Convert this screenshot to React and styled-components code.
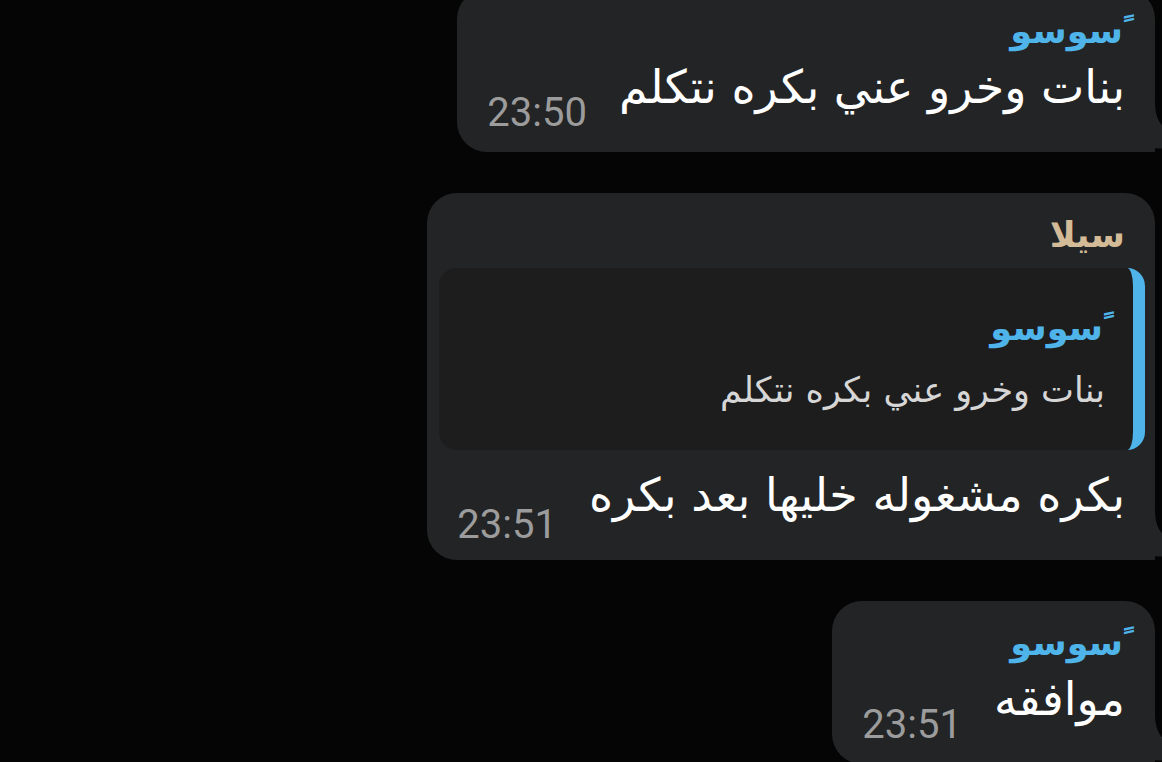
import React from "react";
import styled, { createGlobalStyle } from "styled-components";

const GlobalStyle = createGlobalStyle`
  html, body {
    margin: 0;
    padding: 0;
    background: #050505;
    overflow: hidden;
  }
  #root {
    width: 1162px;
    height: 762px;
    overflow: hidden;
  }
`;

const BLUE = "#4fb4ea";
const BEIGE = "#d4bb98";
const BUBBLE = "#232425";

const Chat = styled.div`
  display: flex;
  flex-direction: column;
  align-items: flex-end;
  gap: 41px;
  margin-top: -11px;
  padding-right: 7px;
`;

const Bubble = styled.div`
  position: relative;
  display: flex;
  flex-direction: column;
  align-items: flex-end;
  background: ${BUBBLE};
  border-radius: 30px 30px 0 30px;
  padding: 22px 30px 19px 30px;
`;

const Tail = styled.svg`
  position: absolute;
  right: -16px;
  bottom: 0;
  width: 30px;
  height: 50px;
`;

const Sender = styled.div`
  font-family: "DejaVu Sans", sans-serif;
  font-weight: bold;
  font-size: 35px;
  line-height: 40px;
  color: ${(p) => p.color};
  margin-right: ${(p) => (p.$marked ? "-10px" : "0")};
`;

const Row = styled.div`
  display: flex;
  align-items: flex-end;
  gap: 32px;
  margin-top: ${(p) => p.$top}px;
`;

const Text = styled.div`
  font-family: "DejaVu Sans", sans-serif;
  font-size: 46px;
  line-height: 60px;
  color: #ffffff;
  margin-bottom: 16px;
`;

const Time = styled.div`
  font-family: Roboto, "Liberation Sans", sans-serif;
  font-size: 40px;
  line-height: 40px;
  color: #9c9c9c;
  margin-bottom: ${(p) => p.$drop}px;
`;

const Quote = styled.div`
  align-self: stretch;
  display: flex;
  flex-direction: column;
  align-items: flex-end;
  margin: 13px -20px 0 -18px;
  padding: 40px 28px 37px 0;
  background: #1d1d1e;
  border-radius: 18px;
  border-right: 12px solid ${BLUE};
`;

const QuoteText = styled.div`
  font-family: "DejaVu Sans", sans-serif;
  font-size: 35px;
  line-height: 46px;
  color: #d6d6d6;
  margin-top: 19px;
`;

const BubbleTail = () => (
  <Tail viewBox="0 0 30 50">
    <path
      d="M0 0 L14 0 C14 14 18 24 30 30 L30 47 Q14 46 4 46 Q2 50 0 50 Z"
      fill={BUBBLE}
    />
  </Tail>
);

const Message = ({ name, color, marked, text, time, children }) => (
  <Bubble>
    <Sender color={color} $marked={marked} dir="rtl">{name}</Sender>
    {children}
    <Row $top={children ? 15 : 6}>
      <Time $drop={children ? -4 : 0}>{time}</Time>
      <Text dir="rtl">{text}</Text>
    </Row>
    <BubbleTail />
  </Bubble>
);

export default function App() {
  return (
    <>
      <GlobalStyle />
      <Chat>
        <Message name="ﹰسوسو" marked color={BLUE} text="بنات وخرو عني بكره نتكلم" time="23:50" />
        <Message name="سيلا" color={BEIGE} text="بكره مشغوله خليها بعد بكره" time="23:51">
          <Quote>
            <Sender color={BLUE} $marked dir="rtl">ﹰسوسو</Sender>
            <QuoteText dir="rtl">بنات وخرو عني بكره نتكلم</QuoteText>
          </Quote>
        </Message>
        <Message name="ﹰسوسو" marked color={BLUE} text="موافقه" time="23:51" />
      </Chat>
    </>
  );
}
